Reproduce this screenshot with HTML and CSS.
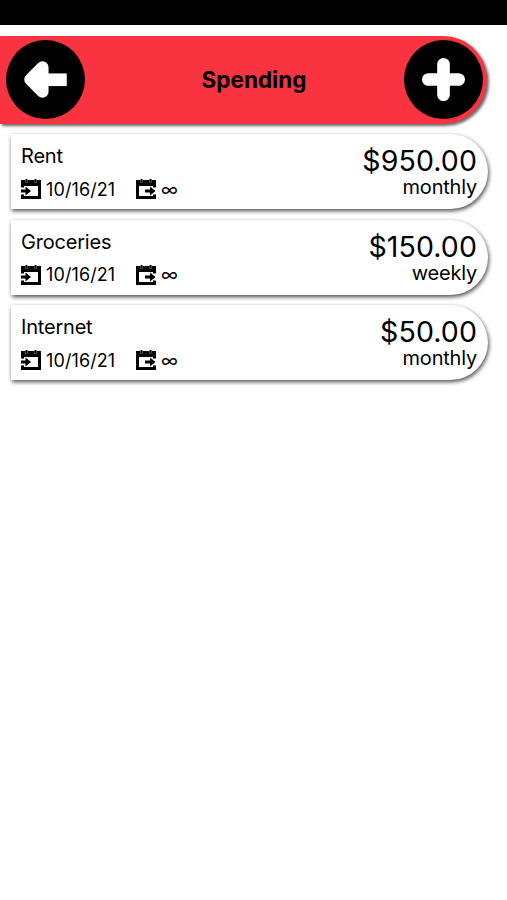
FILE: index.html
```html
<!doctype html>
<html lang="en">

<head>
	<meta charset="utf-8">
	<title>Spending</title>
	<link rel="stylesheet" href="styles.css">
</head>

<body>
	<!-- icons shared by the cards -->
	<svg class="symbols" width="0" height="0">
		<symbol id="icon-start" viewBox="0 0 20 20">
			<path d="M0 1H20V20H0V15.500H3V17H17V7H3V8.500H0Z" />
			<path d="M4.500 0V3.500H6.500V0M13.500 0V3.500H15.500V0" fill="#000" stroke="#777" stroke-width=".6" />
			<path d="M0 10.500H4.500V7.500L10 12L4.500 16.500V13.500H0Z" />
		</symbol>
		<symbol id="icon-end" viewBox="0 0 20 20">
			<path d="M0 1H20V8.500H17V7H3V17H17V15.500H20V20H0Z" />
			<path d="M4.500 0V3.500H6.500V0M13.500 0V3.500H15.500V0" fill="#000" stroke="#777" stroke-width=".6" />
			<path d="M9 10.500H14V7.500L19.500 12L14 16.500V13.500H9Z" />
		</symbol>
	</svg>

	<div class="status-bar"></div>

	<header class="header">
		<button class="round-button" aria-label="Back">
			<svg viewBox="0 0 78 78">
				<path d="M24 39L36 27V51Z" fill="#fff" stroke="#fff" stroke-width="12" stroke-linejoin="round" />
				<path d="M34 33H60V45.500H34Z" fill="#fff" />
			</svg>
		</button>
		<h1 class="title">Spending</h1>
		<button class="round-button" aria-label="Add">
			<svg viewBox="0 0 78 78">
				<path d="M39 24V54M24 39H54" fill="none" stroke="#fff" stroke-width="12.500" stroke-linecap="round" />
			</svg>
		</button>
	</header>

	<main class="list">
		<section class="card">
			<div class="details">
				<div class="name">Rent</div>
				<div class="dates">
					<svg class="icon"><use href="#icon-start" /></svg>
					<span class="date">10/16/21</span>
					<svg class="icon"><use href="#icon-end" /></svg>
					<span class="forever">∞</span>
				</div>
			</div>
			<div class="cost">
				<div class="amount">$950.00</div>
				<div class="period">monthly</div>
			</div>
		</section>
		<section class="card">
			<div class="details">
				<div class="name">Groceries</div>
				<div class="dates">
					<svg class="icon"><use href="#icon-start" /></svg>
					<span class="date">10/16/21</span>
					<svg class="icon"><use href="#icon-end" /></svg>
					<span class="forever">∞</span>
				</div>
			</div>
			<div class="cost">
				<div class="amount">$150.00</div>
				<div class="period">weekly</div>
			</div>
		</section>
		<section class="card">
			<div class="details">
				<div class="name">Internet</div>
				<div class="dates">
					<svg class="icon"><use href="#icon-start" /></svg>
					<span class="date">10/16/21</span>
					<svg class="icon"><use href="#icon-end" /></svg>
					<span class="forever">∞</span>
				</div>
			</div>
			<div class="cost">
				<div class="amount">$50.00</div>
				<div class="period">monthly</div>
			</div>
		</section>
	</main>
</body>

</html>
```
FILE: styles.css
```css
* {
	box-sizing: border-box;
}

body {
	min-height: 100vh;
	margin: 0;
	background: #fff;
	color: #000;
	font-family: Inter, "Liberation Sans", sans-serif;
}

.symbols {
	display: none;
}

.status-bar {
	height: 25px;
	background: #000;
}

.header {
	display: flex;
	align-items: center;
	justify-content: space-between;
	width: 487px;
	height: 88px;
	margin-top: 10.500px;
	padding: 0 4px 0 6px;
	border-radius: 0 44px 44px 0;
	background: #fa3340;
	box-shadow: 2px 2px 3px rgba(0, 0, 0, 0.6);
}

.round-button {
	width: 79px;
	height: 79px;
	padding: 0;
	border: 0;
	border-radius: 50%;
	background: #000;
}

.round-button svg {
	display: block;
	width: 100%;
	height: 100%;
}

.title {
	margin: 0 0 0 19px;
	font-size: 22.500px;
	font-weight: 700;
}

.list {
	display: flex;
	flex-direction: column;
	gap: 10.500px;
	padding: 10.500px 19px 0 11px;
}

.card {
	display: flex;
	justify-content: space-between;
	height: 75px;
	padding: 0 11px 0 10px;
	border-radius: 0 38px 38px 0;
	background: #fff;
	box-shadow: 1px 2px 4px rgba(0, 0, 0, 0.7);
}

.name {
	margin-top: 9px;
	font-size: 20px;
	line-height: 26px;
	letter-spacing: -0.2px;
}

.dates {
	display: flex;
	align-items: center;
	height: 20px;
	margin-top: 10px;
	font-size: 18px;
}

.icon {
	width: 20px;
	height: 20px;
}

.date {
	width: 90px;
	margin: 0 0 0 5px;
	letter-spacing: 0.1px;
}

.forever {
	margin-left: 5px;
}

.cost {
	text-align: right;
}

.amount {
	margin-top: 10px;
	font-size: 28.500px;
	line-height: 33px;
	letter-spacing: 0.1px;
}

.period {
	font-size: 20px;
	line-height: 21px;
	letter-spacing: -0.2px;
}
```
